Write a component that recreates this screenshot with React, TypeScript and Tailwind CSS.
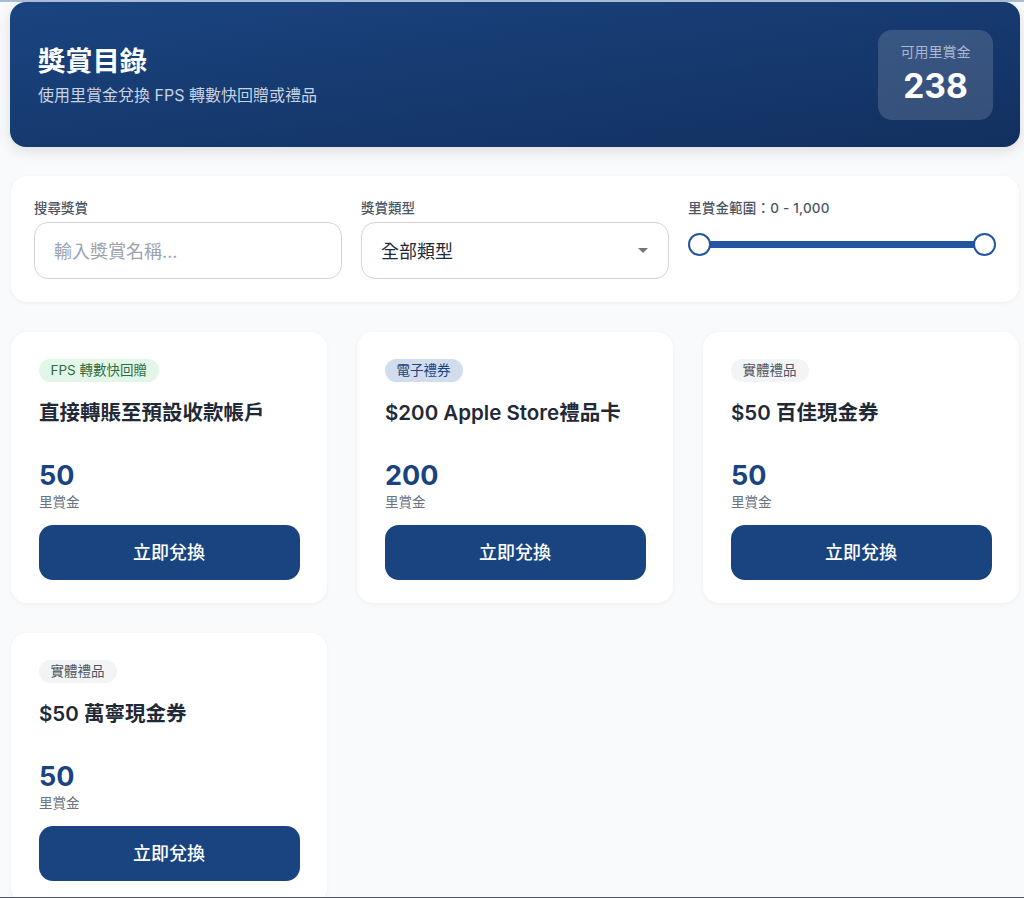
const font = "font-['Inter','Noto_Sans_CJK_TC',sans-serif]";

function Card({ tag, tagClass, title, points }: { tag: string; tagClass: string; title: string; points: string }) {
  return (
    <div className="h-[271px] rounded-[16px] bg-white px-[27.5px] pt-[27px] shadow-[0_1px_4px_rgba(0,0,0,0.05)]">
      <span className={`flex h-[23px] w-fit items-center rounded-full px-[12px] text-[13.5px] ${tagClass}`}>{tag}</span>
      <h3 className="mt-[17px] h-[28px] pl-[0.5px] text-[20.5px] leading-[28px] font-semibold text-[#1f2937]">{title}</h3>
      <div className="mt-[32px] pl-[0.5px] text-[27px] leading-[34px] font-bold text-[#1a4480]">{points}</div>
      <div className="pl-[0.5px] text-[13.5px] leading-[18px] text-[#6b7280]">里賞金</div>
      <button className="mt-[14px] h-[55px] w-full rounded-[14px] bg-[#1a4480] text-[18px] font-medium text-white">立即兌換</button>
    </div>
  );
}

export default function App() {
  return (
    <div className={`flex h-[898px] flex-col overflow-hidden bg-[#f9fafb] antialiased ${font}`}>
      <div className="h-[2px] shrink-0 bg-[#a9bbd6]" />
      <div className="min-h-0 flex-1 overflow-hidden pr-[4px] pl-[10px]">
        <header className="flex h-[145px] items-center justify-between rounded-[16px] bg-[linear-gradient(172deg,#1a4480,#12305f)] pr-[27px] pl-[28px] shadow-[0_4px_14px_rgba(0,0,0,0.12)]">
          <div>
            <h1 className="text-[27.25px] leading-[36px] font-bold text-white">獎賞目錄</h1>
            <p className="mt-[4px] text-[16px] leading-[22px] text-[#c9d3e2]">使用里賞金兌換 FPS 轉數快回贈或禮品</p>
          </div>
          <div className="flex h-[90px] w-[115px] flex-col items-center justify-center rounded-[14px] bg-white/15">
            <div className="text-[14px] leading-[20px] text-[#a9b8d0]">可用里賞金</div>
            <div className="mt-[3px] text-[33.5px] leading-[42px] font-bold text-white">238</div>
          </div>
        </header>

        <section className="mx-px mt-[29px] grid h-[126px] grid-cols-3 gap-[19px] rounded-[16px] bg-white px-[23px] pt-[24px] shadow-[0_1px_4px_rgba(0,0,0,0.05)]">
          <div>
            <label className="block text-[13.5px] leading-[16px] font-medium text-[#4b5563]">搜尋獎賞</label>
            <input
              placeholder="輸入獎賞名稱..."
              className="mt-[6px] h-[57px] w-full rounded-[14px] border border-[#d1d5db] px-[19px] pt-[2px] text-[18px] text-[#1f2937] outline-none placeholder:text-[#9ca3af]"
            />
          </div>
          <div>
            <label className="block text-[13.5px] leading-[16px] font-medium text-[#4b5563]">獎賞類型</label>
            <div className="mt-[6px] flex h-[57px] items-center justify-between rounded-[14px] border border-[#d1d5db] px-[19px] text-[18px] text-[#1f2937]">
              <span className="pt-[2px]">全部類型</span>
              <svg width="10" height="5" viewBox="0 0 10 5" className="mr-px">
                <path d="M0 0h10L5 5z" fill="#757575" />
              </svg>
            </div>
          </div>
          <div>
            <label className="block text-[13.5px] leading-[16px] font-medium tracking-[0.2px] text-[#4b5563]">里賞金範圍：0 - 1,000</label>
            <div className="relative mt-[17px] h-[23px]">
              <div className="absolute top-[8px] right-[10px] left-[10px] h-[7px] bg-[#2456a0]" />
              <div className="absolute top-0 left-0 h-[23px] w-[23px] rounded-full border-[2.5px] border-[#2456a0] bg-white" />
              <div className="absolute top-0 right-0 h-[23px] w-[23px] rounded-full border-[2.5px] border-[#2456a0] bg-white" />
            </div>
          </div>
        </section>

        <section className="mx-px mt-[30px] grid grid-cols-3 gap-[30px]">
          <Card tag="FPS 轉數快回贈" tagClass="bg-[#e3f7e8] text-[#2e6b41]" title="直接轉賬至預設收款帳戶" points="50" />
          <Card tag="電子禮券" tagClass="bg-[#d1dded] text-[#1a4480]" title="$200 Apple Store禮品卡" points="200" />
          <Card tag="實體禮品" tagClass="bg-[#f3f4f6] text-[#4b5563]" title="$50 百佳現金券" points="50" />
          <Card tag="實體禮品" tagClass="bg-[#f3f4f6] text-[#4b5563]" title="$50 萬寧現金券" points="50" />
        </section>
      </div>
      <div className="h-px shrink-0 bg-[#4b5563]" />
    </div>
  );
}
